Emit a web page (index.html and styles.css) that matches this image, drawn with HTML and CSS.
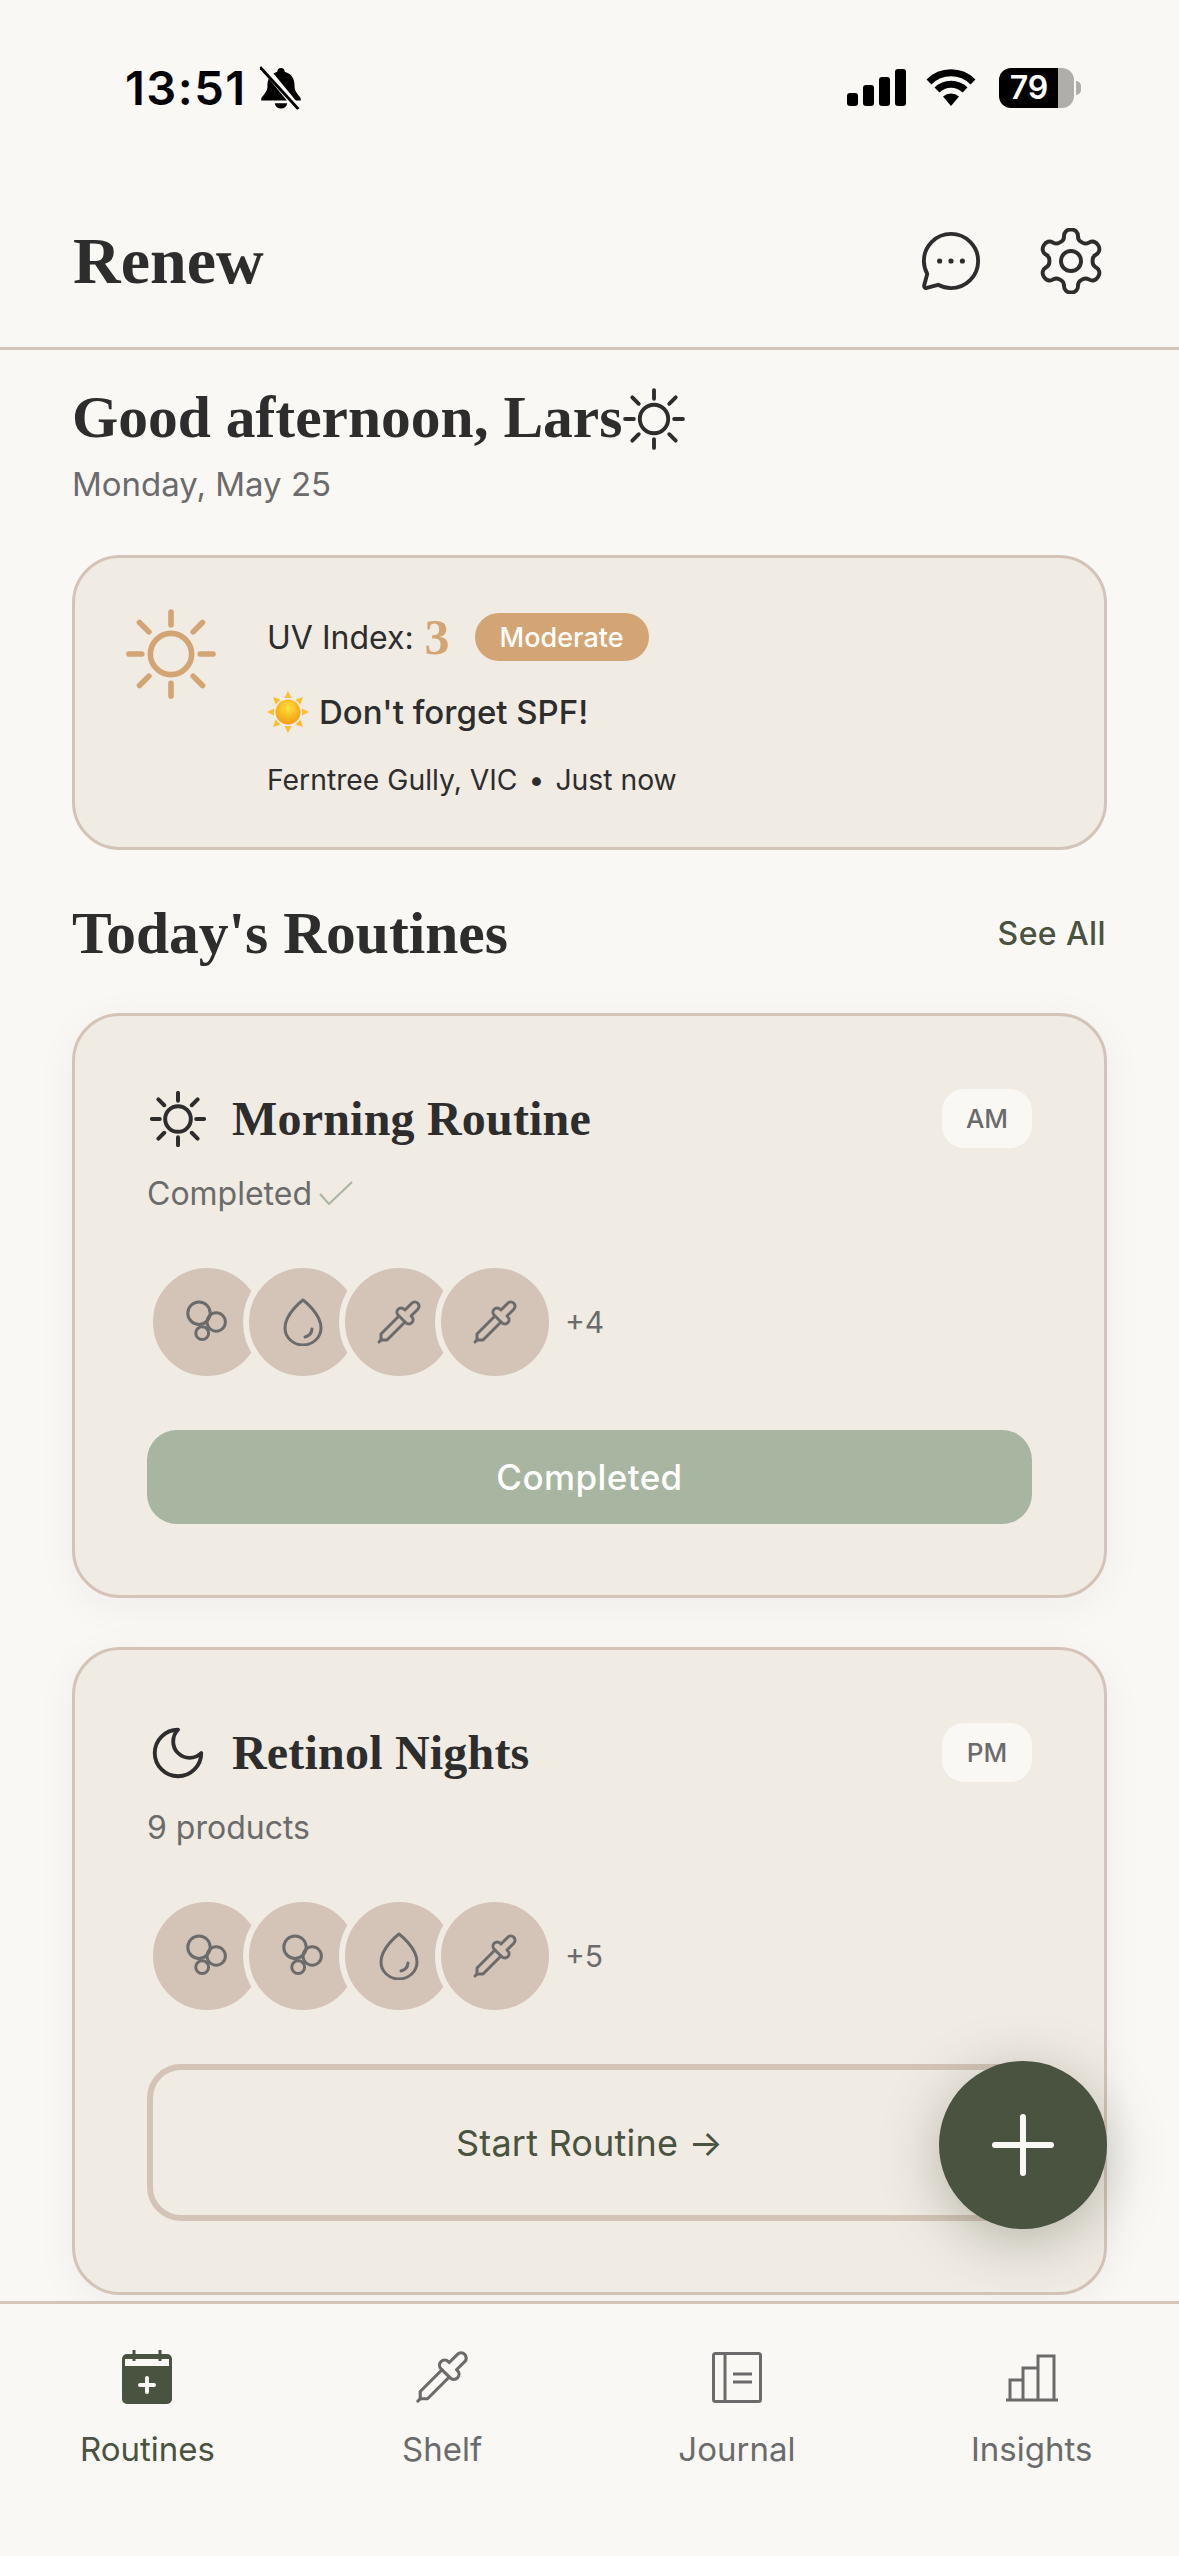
FILE: index.html
```html
<!DOCTYPE html>
<html lang="en">
<head>
    <meta charset="UTF-8">
    <meta name="viewport" content="width=device-width, initial-scale=1.0">
    <title>Renew</title>
    <link rel="stylesheet" href="styles.css">
</head>
<body>
    <svg class="defs" aria-hidden="true">
        <symbol id="sun" viewBox="0 0 24 24">
            <circle cx="12" cy="12" r="5.5"/>
            <path d="M12 .8v3.4M12 19.8v3.4M.8 12h3.4M19.8 12h3.4M3.6 3.6l2.5 2.5M17.9 17.9l2.5 2.5M3.6 20.4l2.5-2.5M17.9 6.1l2.5-2.5"/>
        </symbol>
        <symbol id="moon" viewBox="0 0 24 24">
            <path d="M12 3a6 6 0 0 0 9 9 9 9 0 1 1-9-9Z"/>
        </symbol>
        <symbol id="bubbles" viewBox="0 0 24 24">
            <circle cx="8" cy="7.6" r="5.6"/>
            <circle cx="16.6" cy="12" r="4.6"/>
            <circle cx="9.6" cy="17.6" r="3.2"/>
        </symbol>
        <symbol id="drop" viewBox="0 0 24 24">
            <path d="M12 1C12 1 21 7.800 21 15A9 8.500 0 0 1 3 15C3 7.800 12 1 12 1Z"/>
            <path d="M16.500 15.500a4.500 4.500 0 0 1-3.500 4"/>
        </symbol>
        <symbol id="pipette" viewBox="0 0 24 24">
            <path d="m2 22 1-1h3l9-9"/>
            <path d="M3 21v-3l9-9"/>
            <path d="m15 6 3.400-3.400a2.100 2.100 0 1 1 3 3L18 9l.4.4a2.100 2.100 0 1 1-3 3l-3.800-3.800a2.100 2.100 0 1 1 3-3l.4.4Z"/>
        </symbol>
    </svg>

    <div class="app">
        <div class="status-bar">
            <div class="status-left">
                <span class="clock">13:51</span>
                <svg class="bell" viewBox="3 0 34 42" preserveAspectRatio="none">
                    <path class="bell-body" d="M20 2c-2 0-3 1.500-3 3.500C10 8 9 14 9 20c0 5-4 8-5 11v2h32v-2c-1-3-5-6-5-11 0-6-1-12-8-14.500C23 3.500 22 2 20 2Z"/>
                    <path class="bell-body" d="M15 35.500a5 5 0 0 0 10 0Z"/>
                    <path class="bell-gap" d="M6 1l28 40"/>
                    <path class="bell-slash" d="M3 1l31 40"/>
                </svg>
            </div>
            <div class="status-right">
                <svg class="signal" viewBox="0 0 59 37">
                    <rect x="0" y="24" width="11" height="13" rx="3"/>
                    <rect x="16" y="16" width="11" height="21" rx="3"/>
                    <rect x="32" y="8" width="11" height="29" rx="3"/>
                    <rect x="48" y="0" width="11" height="37" rx="3"/>
                </svg>
                <svg class="wifi" viewBox="0 0 50 37">
                    <path class="wifi-arc" d="M3 13A31 31 0 0 1 47 13"/>
                    <path class="wifi-arc" d="M11 21A20 20 0 0 1 39 21"/>
                    <path d="M25 37 17 27.500A12 12 0 0 1 33 27.500Z"/>
                </svg>
                <div class="battery">
                    <div class="battery-body"><span class="battery-level">79</span></div>
                    <div class="battery-nib"></div>
                </div>
            </div>
        </div>

        <header class="app-header">
            <h1 class="logo">Renew</h1>
            <div class="header-actions">
                <svg class="header-icon" viewBox="0 0 24 24">
                    <path d="M12 1.500C17.800 1.500 22.500 6.200 22.500 12S17.800 22.500 12 22.500c-1.800 0-3.500-.5-5-1.300L2.600 22.400c-.6.2-1.100-.3-1-.9L2.800 17A10.500 10.500 0 0 1 1.500 12C1.500 6.200 6.200 1.500 12 1.500Z"/>
                    <circle class="dot" cx="7.600" cy="12" r="1"/>
                    <circle class="dot" cx="12" cy="12" r="1"/>
                    <circle class="dot" cx="16.400" cy="12" r="1"/>
                </svg>
                <svg class="header-icon gear" viewBox="1.500 1.500 21 21">
                    <path d="M12.220 2h-.44a2 2 0 0 0-2 2v.18a2 2 0 0 1-1 1.730l-.43.250a2 2 0 0 1-2 0l-.15-.08a2 2 0 0 0-2.730.730l-.22.380a2 2 0 0 0 .73 2.730l.15.100a2 2 0 0 1 1 1.720v.51a2 2 0 0 1-1 1.740l-.15.090a2 2 0 0 0-.73 2.730l.22.380a2 2 0 0 0 2.730.730l.15-.08a2 2 0 0 1 2 0l.43.250a2 2 0 0 1 1 1.730V20a2 2 0 0 0 2 2h.44a2 2 0 0 0 2-2v-.18a2 2 0 0 1 1-1.730l.43-.25a2 2 0 0 1 2 0l.15.08a2 2 0 0 0 2.730-.73l.22-.39a2 2 0 0 0-.73-2.730l-.15-.08a2 2 0 0 1-1-1.740v-.5a2 2 0 0 1 1-1.740l.15-.09a2 2 0 0 0 .73-2.730l-.22-.38a2 2 0 0 0-2.730-.73l-.15.08a2 2 0 0 1-2 0l-.43-.25a2 2 0 0 1-1-1.730V4a2 2 0 0 0-2-2z"/>
                    <circle cx="12" cy="12" r="3.200"/>
                </svg>
            </div>
        </header>

        <main class="content">
            <div class="greeting">
                <h2>Good afternoon, Lars</h2>
                <svg class="icon greeting-sun"><use href="#sun"/></svg>
            </div>
            <p class="date">Monday, May 25</p>

            <section class="uv-card">
                <svg class="icon uv-sun"><use href="#sun"/></svg>
                <div class="uv-info">
                    <div class="uv-row">
                        <span>UV Index:</span>
                        <span class="uv-value">3</span>
                        <span class="uv-badge">Moderate</span>
                    </div>
                    <div class="uv-tip">
                        <svg class="emoji-sun" viewBox="0 0 42 42">
                            <defs>
                                <radialGradient id="sunFill" cx="50%" cy="35%" r="65%">
                                    <stop offset="0" stop-color="#ffe23d"/>
                                    <stop offset="1" stop-color="#f79a12"/>
                                </radialGradient>
                            </defs>
                            <path class="ray" d="M21 0l3.500 7h-7zM21 42l3.500-7h-7zM0 21l7-3.500v7zM42 21l-7-3.500v7zM6 6l7.500 2.500-5 5zM36 6l-2.500 7.500-5-5zM6 36l2.500-7.500 5 5zM36 36l-7.500-2.500 5-5z"/>
                            <circle cx="21" cy="21" r="12.500" fill="url(#sunFill)"/>
                        </svg>
                        <span>Don't forget SPF!</span>
                    </div>
                    <div class="uv-meta">Ferntree Gully, VIC <span class="uv-bullet">•</span> Just now</div>
                </div>
            </section>

            <div class="section-head">
                <h2>Today's Routines</h2>
                <span class="see-all">See All</span>
            </div>

            <section class="routine-card">
                <div class="routine-top">
                    <div class="routine-title">
                        <span class="routine-icon"><svg class="icon routine-sun"><use href="#sun"/></svg></span>
                        <h3>Morning Routine</h3>
                    </div>
                    <span class="time-badge">AM</span>
                </div>
                <div class="routine-sub">
                    Completed
                    <svg class="check" viewBox="0 0 34 24"><path d="M1 13l9 10L33 1"/></svg>
                </div>
                <div class="product-row">
                    <span class="product"><svg class="icon"><use href="#bubbles"/></svg></span>
                    <span class="product"><svg class="icon"><use href="#drop"/></svg></span>
                    <span class="product"><svg class="icon"><use href="#pipette"/></svg></span>
                    <span class="product"><svg class="icon"><use href="#pipette"/></svg></span>
                    <span class="more">+4</span>
                </div>
                <button class="btn-done" type="button">Completed</button>
            </section>

            <section class="routine-card">
                <div class="routine-top">
                    <div class="routine-title">
                        <span class="routine-icon"><svg class="icon routine-moon"><use href="#moon"/></svg></span>
                        <h3>Retinol Nights</h3>
                    </div>
                    <span class="time-badge">PM</span>
                </div>
                <div class="routine-sub">9 products</div>
                <div class="product-row">
                    <span class="product"><svg class="icon"><use href="#bubbles"/></svg></span>
                    <span class="product"><svg class="icon"><use href="#bubbles"/></svg></span>
                    <span class="product"><svg class="icon"><use href="#drop"/></svg></span>
                    <span class="product"><svg class="icon"><use href="#pipette"/></svg></span>
                    <span class="more">+5</span>
                </div>
                <button class="btn-start" type="button">Start Routine →</button>
            </section>

            <button class="fab" type="button" aria-label="Add">
                <svg viewBox="0 0 62 62"><path d="M31 3v56M3 31h56"/></svg>
            </button>
        </main>

        <nav class="tab-bar">
            <a class="tab tab-active">
                <svg class="tab-icon" viewBox="0 0 58 58">
                    <rect class="cal-body" x="4" y="6" width="50" height="50" rx="5"/>
                    <rect class="cal-band" x="7" y="11" width="44" height="7"/>
                    <path class="cal-ring" d="M16 2v11M42 2v11"/>
                    <path class="cal-plus" d="M29 30v14M22 37h14"/>
                </svg>
                <span>Routines</span>
            </a>
            <a class="tab">
                <svg class="tab-icon tab-stroke"><use href="#pipette"/></svg>
                <span>Shelf</span>
            </a>
            <a class="tab">
                <svg class="tab-icon tab-line" viewBox="0 0 58 58">
                    <rect x="5.500" y="5.500" width="47" height="48" rx="2"/>
                    <path d="M17 5.500v48M25 26h19M25 34h19"/>
                </svg>
                <span>Journal</span>
            </a>
            <a class="tab">
                <svg class="tab-icon tab-line" viewBox="0 0 58 58">
                    <path d="M3 52h52M7 52V32h13v20M20 52V20h15v32M35 52V8h16v44"/>
                </svg>
                <span>Insights</span>
            </a>
        </nav>
    </div>
</body>
</html>
```

FILE: styles.css
```css
* { box-sizing: border-box; }
html, body { margin: 0; padding: 0; }
body { background: #faf8f5; color: #2d2d2d; font-family: "Inter", "Noto Sans", sans-serif; }
h1, h2, h3, p { margin: 0; }
.defs { display: none; }

.app { width: 1179px; height: 2556px; display: flex; flex-direction: column; overflow: hidden; }
.icon { display: block; width: 48px; height: 48px; fill: none; stroke: #6b6b6b; stroke-width: 1.5; stroke-linecap: round; stroke-linejoin: round; }

.status-bar { height: 175px; flex: none; padding: 0 98px 0 125px; display: flex; justify-content: space-between; align-items: center; color: #000; }
.status-left { display: flex; align-items: center; gap: 13px; }
.clock { font-size: 47px; font-weight: 600; letter-spacing: 1.5px; }
.bell { width: 42px; height: 44px; }
.bell-body { fill: #000; }
.bell-gap { stroke: #faf8f5; stroke-width: 6; fill: none; }
.bell-slash { stroke: #000; stroke-width: 2.500; fill: none; }
.status-right { display: flex; align-items: center; }
.signal { width: 59px; height: 37px; margin-right: 20px; fill: #000; }
.wifi { width: 50px; height: 37px; margin-right: 23px; fill: #000; }
.wifi-arc { fill: none; stroke: #000; stroke-width: 7; }
.battery { display: flex; align-items: center; gap: 2px; }
.battery-body { width: 75px; height: 40px; border-radius: 12px; background: linear-gradient(90deg, #000 79%, #b0aeab 79%); padding-left: 9px; display: flex; align-items: center; }
.battery-level { color: #fff; font-size: 32px; font-weight: 600; width: 42px; text-align: center; }
.battery-nib { width: 5px; height: 14px; background: #b0aeab; border-radius: 0 5px 5px 0; }

.app-header { height: 175px; flex: none; padding: 0 75px 0 73px; display: flex; justify-content: space-between; align-items: center; border-bottom: 3px solid #d4c4b7; }
.logo { font-family: "Liberation Serif", serif; font-size: 66px; font-weight: 700; }
.header-actions { display: flex; align-items: center; gap: 56px; }
.header-icon { width: 62px; height: 62px; fill: none; stroke: #2d2d2d; stroke-width: 1.500; stroke-linecap: round; stroke-linejoin: round; }
.header-icon .dot { fill: #2d2d2d; stroke: none; }
.gear { width: 66px; height: 66px; stroke-width: 1.250; }

.content { position: relative; flex: 1; min-height: 0; padding: 32px 72px 0; }
.greeting { height: 70px; display: flex; align-items: center; }
.greeting h2 { font-family: "Liberation Serif", serif; font-size: 59.500px; font-weight: 700; white-space: nowrap; }
.greeting-sun { width: 62px; height: 62px; stroke: #2d2d2d; margin: 4px 0 0 1px; }
.date { margin-top: 11px; font-size: 33px; line-height: 42px; color: #6b6b6b; }

.uv-card { margin-top: 50px; height: 295px; padding: 51px 51px 47px; display: flex; gap: 51px; background: #f0ebe3; border: 3px solid #d4c4b7; border-radius: 48px; }
.uv-sun { width: 90px; height: 90px; stroke: #d4a574; }
.uv-info { padding-top: 4px; }
.uv-row { height: 48px; display: flex; align-items: center; font-size: 32px; }
.uv-value { margin-left: 11px; font-family: "Liberation Serif", serif; font-size: 50px; font-weight: 700; color: #d4a574; }
.uv-badge { margin-left: 25px; height: 48px; padding: 0 25px; display: flex; align-items: center; border-radius: 24px; background: #d4a574; color: #fff; font-size: 27px; font-weight: 500; }
.uv-tip { margin-top: 30px; height: 42px; display: flex; align-items: center; gap: 10px; font-size: 33px; font-weight: 500; }
.emoji-sun { width: 42px; height: 42px; }
.ray { fill: #fbbf30; }
.uv-meta { margin-top: 27px; font-size: 28.300px; line-height: 40px; }
.uv-bullet { margin: 0 3px; }

.section-head { margin-top: 48px; height: 70px; margin-bottom: 45px; display: flex; justify-content: space-between; align-items: center; }
.section-head h2 { font-family: "Liberation Serif", serif; font-size: 59.500px; font-weight: 700; }
.see-all { font-size: 32px; font-weight: 500; color: #4a5240; letter-spacing: 0.4px; margin-right: 1px; }

.routine-card { margin-bottom: 49px; padding: 73px 72px 71px; background: #f0ebe3; border: 3px solid #d4c4b7; border-radius: 48px; box-shadow: 0 8px 40px rgba(45, 45, 45, 0.05); }
.routine-top { height: 59px; display: flex; justify-content: space-between; align-items: center; }
.routine-title { display: flex; align-items: center; gap: 23px; }
.routine-title h3 { font-family: "Liberation Serif", serif; font-size: 48px; font-weight: 700; letter-spacing: 0.2px; }
.routine-icon { width: 62px; height: 62px; display: flex; align-items: center; justify-content: center; }
.routine-sun { width: 56px; height: 56px; stroke: #2d2d2d; stroke-width: 1.700; }
.routine-moon { width: 62px; height: 62px; stroke: #2d2d2d; }
.time-badge { width: 90px; height: 59px; display: flex; align-items: center; justify-content: center; border-radius: 22px; background: #faf8f5; color: #6b6b6b; font-size: 26px; font-weight: 500; }
.routine-sub { margin-top: 24px; height: 42px; display: flex; align-items: center; gap: 7px; font-size: 32px; color: #6b6b6b; }
.check { width: 34px; height: 24px; fill: none; stroke: #a8b5a0; stroke-width: 2; }

.product-row { margin-top: 48px; display: flex; align-items: center; }
.product { width: 120px; height: 120px; margin-right: -24px; flex: none; display: flex; align-items: center; justify-content: center; border: 6px solid #f0ebe3; border-radius: 50%; background: #d4c4b7; }
.more { margin-left: 34px; font-size: 30px; color: #6b6b6b; }

.btn-done, .btn-start { display: block; width: 885px; margin-top: 48px; font-family: inherit; }
.btn-done { height: 94px; border: 0; border-radius: 30px; background: #a8b5a0; color: #fff; font-size: 35px; font-weight: 500; letter-spacing: 0.4px; }
.btn-start { height: 157px; border: 6px solid #d4c4b7; border-radius: 34px; background: #f0ebe3; color: #4a5240; font-size: 36px; font-weight: 400; letter-spacing: 0.2px; }

.fab { position: absolute; right: 72px; top: 1711px; width: 168px; height: 168px; padding: 0; border: 0; border-radius: 50%; background: #4a5240; box-shadow: 0 12px 56px rgba(74, 82, 64, 0.35); display: flex; align-items: center; justify-content: center; }
.fab svg { width: 62px; height: 62px; fill: none; stroke: #faf8f5; stroke-width: 6; stroke-linecap: round; }

.tab-bar { height: 255px; flex: none; display: grid; grid-template-columns: repeat(4, 1fr); border-top: 3px solid #d4c4b7; background: #faf8f5; position: relative; }
.tab { display: flex; flex-direction: column; align-items: center; padding-top: 44px; color: #6b6b6b; font-size: 33px; }
.tab span { margin-top: 22px; line-height: 42px; }
.tab-active { color: #4a5240; }
.tab-icon { width: 58px; height: 58px; }
.tab-stroke { fill: none; stroke: #6b6b6b; stroke-width: 1.300; stroke-linecap: round; stroke-linejoin: round; }
.tab-line { fill: none; stroke: #6b6b6b; stroke-width: 3; }
.cal-body { fill: #4a5240; }
.cal-band { fill: #faf8f5; }
.cal-ring { stroke: #4a5240; stroke-width: 3; }
.cal-plus { stroke: #faf8f5; stroke-width: 4; stroke-linecap: round; }
```
